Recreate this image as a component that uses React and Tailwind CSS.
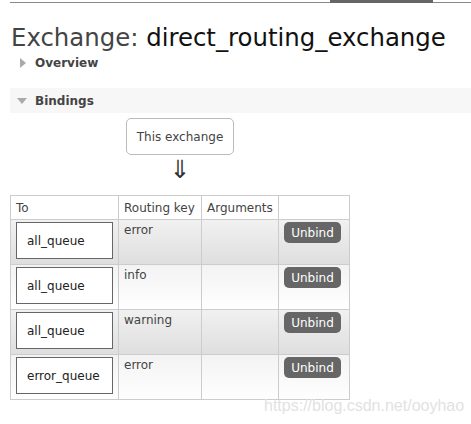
import React from "react";

const rows = [
  { q: "all_queue", key: "error" },
  { q: "all_queue", key: "info" },
  { q: "all_queue", key: "warning" },
  { q: "error_queue", key: "error" },
];

export default function App() {
  return (
    <div className="relative w-[471px] h-[424px] overflow-hidden bg-white font-['DejaVu_Sans',Verdana,sans-serif] text-[#444]">
      <div className="flex items-end h-[3px] pl-[10px]">
        <div className="w-[320px] h-px bg-[#888]" />
        <div className="w-[103px] h-[3px] bg-[#666]" />
        <div className="flex-1 h-px bg-[#888]" />
      </div>
      <h1 className="mt-[21px] ml-[11px] text-[24.4px] leading-[28px] whitespace-nowrap">
        <span className="text-[#444]">Exchange: </span>
        <span className="text-[#111]">direct_routing_exchange</span>
      </h1>
      <div className="mt-[4px] ml-[20px] flex items-center h-[14px]">
        <svg width="6" height="10" viewBox="0 0 6 10" className="mr-[9px]">
          <polygon points="0,0 6,5 0,10" fill="#aaa" />
        </svg>
        <span className="text-[12px] font-bold text-[#444] leading-[14px]">Overview</span>
      </div>
      <div className="mt-[18px] ml-[10px] h-[25px] bg-[#f7f7f7] flex items-center pl-[7px]">
        <svg width="10" height="6" viewBox="0 0 10 6" className="mr-[8px]">
          <polygon points="0,0 10,0 5,6" fill="#aaa" />
        </svg>
        <span className="text-[12px] font-bold text-[#444] leading-[14px]">Bindings</span>
      </div>
      <div className="mt-[5px] ml-[126px] w-[108px] h-[37px] border border-[#bbb] rounded-[5px] flex items-center justify-center text-[12px]">
        This exchange
      </div>
      <div className="ml-[126px] w-[108px] h-[40px] flex justify-center text-[25px] leading-[30px] text-[#333]">
        ⇓
      </div>
      <table className="ml-[10px] border-collapse border border-[#ccc] text-[12px] leading-[14px]">
        <thead>
          <tr className="h-[24px]">
            <th className="w-[108px] border border-[#ccc] px-[5px] text-left font-normal">To</th>
            <th className="w-[83px] border border-[#ccc] px-[5px] text-left font-normal">Routing key</th>
            <th className="w-[77px] border border-[#ccc] px-[5px] text-left font-normal">Arguments</th>
            <th className="w-[71px] border border-[#ccc] px-[5px] text-left font-normal"></th>
          </tr>
        </thead>
        <tbody>
          {rows.map((r, i) => (
            <tr
              key={i}
              className={
                i % 2 === 0
                  ? "h-[45px] bg-gradient-to-b from-[#f1f1f1] to-[#dedede]"
                  : "h-[45px] bg-gradient-to-b from-[#f3f3f3] to-[#ffffff]"
              }
            >
              <td className="border border-[#ccc] pl-[5px] pr-[4px] pt-[2px] pb-[4px] align-top">
                <div className="w-[97px] h-[37px] border border-[#666] bg-white flex items-center pl-[10px] text-[#222] whitespace-nowrap">
                  {r.q}
                </div>
              </td>
              <td className="border border-[#ccc] px-[5px] pt-[3px] align-top">{r.key}</td>
              <td className="border border-[#ccc]"></td>
              <td className="border border-[#ccc] pl-[5px] pt-[2px] align-top">
                <div className="w-[57px] h-[21px] rounded-[5px] bg-[#666] text-white flex items-center justify-center">
                  Unbind
                </div>
              </td>
            </tr>
          ))}
        </tbody>
      </table>
      <div className="absolute left-[264px] top-[397px] text-[16px] leading-[18px] text-[#e2e2e2] font-['Liberation_Sans',Arial,sans-serif] whitespace-nowrap">
        https://blog.csdn.net/ooyhao
      </div>
    </div>
  );
}
